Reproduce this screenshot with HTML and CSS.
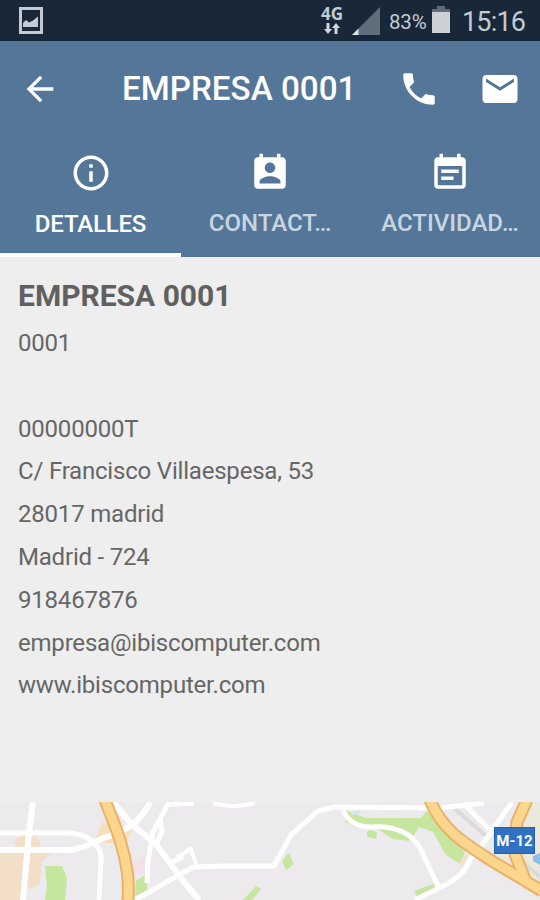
FILE: index.html
```html
<!DOCTYPE html>
<html lang="es">
<head>
  <meta charset="UTF-8" />
  <meta name="viewport" content="width=device-width, initial-scale=1.0" />
  <title>EMPRESA 0001</title>
  <link rel="stylesheet" href="styles.css">
</head>
<body>
  <div class="status-bar">
    <svg class="status-picture" width="24" height="28" viewBox="0 0 24 28">
      <rect x="1.500" y="1.500" width="21" height="24" fill="none" stroke="#c3cad3" stroke-width="3" />
      <path d="M4 20v-4l3-3 3 2.500 4-2 5-4v10.500z" fill="#c3cad3" />
    </svg>
    <div class="network">
      <span>4G</span>
      <svg width="16" height="11" viewBox="0 0 16 11" fill="#d0d6dc">
        <path d="M2.500 0h3v6H8l-4 5-4-5h2.500zM10.500 11h3V5H16l-4-5-4 5h2.500z" />
      </svg>
    </div>
    <svg class="signal" width="28" height="28" viewBox="0 0 28 28">
      <path d="M28 0v28H0z" fill="#5f6e7b" />
      <path d="M6.500 21.500V28H0z" fill="#dde2e6" />
    </svg>
    <span class="percent">83%</span>
    <svg class="battery" width="18" height="27" viewBox="0 0 18 27">
      <path d="M5 0h8v3h5v4H0V3h5z" fill="#5f6e7b" />
      <path d="M0 6h18v21H0z" fill="#cdd1d6" />
    </svg>
    <span class="clock">15:16</span>
  </div>

  <header>
    <svg class="back" width="40" height="40" viewBox="0 0 24 24" fill="#fff">
      <path d="M20 11H7.830l5.590-5.590L12 4l-8 8 8 8 1.410-1.410L7.830 13H20v-2z" />
    </svg>
    <h1>EMPRESA 0001</h1>
    <svg class="call" width="42" height="42" viewBox="0 0 24 24" fill="#fff">
      <path d="M6.620 10.790c1.440 2.830 3.760 5.140 6.590 6.590l2.200-2.200c.27-.27.67-.36 1.020-.24 1.120.37 2.330.57 3.570.57.55 0 1 .45 1 1V20c0 .55-.45 1-1 1-9.390 0-17-7.610-17-17 0-.55.45-1 1-1h3.500c.55 0 1 .45 1 1 0 1.250.2 2.450.57 3.570.11.35.03.74-.25 1.020l-2.200 2.200z" />
    </svg>
    <svg class="mail" width="42" height="42" viewBox="0 0 24 24" fill="#fff">
      <path d="M20 4H4c-1.100 0-1.990.9-1.990 2L2 18c0 1.100.9 2 2 2h16c1.100 0 2-.9 2-2V6c0-1.100-.9-2-2-2zm0 4l-8 5-8-5V6l8 5 8-5v2z" />
    </svg>
  </header>

  <nav>
    <div class="tab active">
      <svg width="42" height="42" viewBox="0 0 24 24" fill="#fff">
        <path d="M11 17h2v-6h-2v6zm1-15C6.480 2 2 6.480 2 12s4.480 10 10 10 10-4.480 10-10S17.520 2 12 2zm0 18c-4.410 0-8-3.590-8-8s3.590-8 8-8 8 3.590 8 8-3.590 8-8 8zM11 9h2V7h-2v2z" />
      </svg>
      <span>DETALLES</span>
    </div>
    <div class="tab">
      <svg width="42" height="42" viewBox="0 0 24 24" fill="#fff">
        <path d="M19 3h-1V1h-2v2H8V1H6v2H5c-1.110 0-2 .9-2 2v14c0 1.100.89 2 2 2h14c1.100 0 2-.9 2-2V5c0-1.100-.9-2-2-2zm-7 3c1.660 0 3 1.340 3 3s-1.340 3-3 3-3-1.340-3-3 1.340-3 3-3zm6 12H6v-1c0-2 4-3.100 6-3.100s6 1.100 6 3.100v1z" />
      </svg>
      <span>CONTACT…</span>
    </div>
    <div class="tab">
      <svg width="42" height="42" viewBox="0 0 24 24" fill="#fff">
        <path d="M17 10H7v2h10v-2zm2-7h-1V1h-2v2H8V1H6v2H5c-1.110 0-1.990.9-1.990 2L3 19c0 1.100.89 2 2 2h14c1.100 0 2-.9 2-2V5c0-1.100-.9-2-2-2zm0 16H5V8h14v11zm-5-5H7v2h7v-2z" />
      </svg>
      <span>ACTIVIDAD…</span>
    </div>
  </nav>

  <main>
    <h2>EMPRESA 0001</h2>
    <p>0001</p>
    <p class="empty"></p>
    <p>00000000T</p>
    <p>C/ Francisco Villaespesa, 53</p>
    <p>28017 madrid</p>
    <p>Madrid - 724</p>
    <p>918467876</p>
    <p>empresa@ibiscomputer.com</p>
    <p>www.ibiscomputer.com</p>
  </main>

  <div class="map">
    <svg width="540" height="98" viewBox="0 0 540 98" fill="none">
      <rect width="540" height="98" fill="#eceaed" />
      <!-- built-up areas and parks -->
      <path d="M0 51h52l-10 8-2 22-10 6-8-3-2 14H0zM14 40l10-9h10l7 10-2 6H18z" fill="#f3dfc8" />
      <path d="M95 40l7-20 18 8 12-1-7 18-14-4z" fill="#f8dfb9" />
      <path d="M134 60l8-7 6 8-3 12-10-2z" fill="#f2e1e8" />
      <path d="M45 64h17l5 12-2 22H45l2-13z" fill="#c6e6a0" />
      <path d="M136 79l9-6 3 16-13 7z" fill="#c6e6a0" />
      <path d="M282 59l7-8 5 11-8 6zM243 98l13-14 5 3-9 11z" fill="#c6e6a0" />
      <path d="M344 8l22 8h55l5-7 10 7 15 20 14 14-5 12-14-9-13-23-14-5-9 14-17-2-17-11-21-1-9-5zM367 30l3-2 7 2-1 7-9-2zM414 89l19-7 3 5-19 8z" fill="#c6e6a0" />
      <path d="M459 60l7-8 2 3-6 9z" fill="#f3dfc8" />
      <path d="M515 12l8-12h17v98l-43-36 11-26z" fill="#ebe8dc" />
      <path d="M533 54l7-3v12l-7-4z" fill="#8dbcf4" />
      <path d="M352 12l8-2" stroke="#cde9ec" stroke-width="3" />
      <path d="M455 7l31 27M525 62l15 13" stroke="#dadadc" stroke-width="4" />
      <!-- streets -->
      <g stroke="#fff" stroke-linejoin="round">
        <path d="M33 0l-4 30-6 68" stroke-width="6" />
        <path d="M0 48h71q16-3 32-12 35-9 47-36" stroke-width="6" />
        <path d="M0 31h70c18 1 33 13 31 29l-2 38" stroke-width="5" />
        <path d="M113 0l19 23 23 18 26 35 18 22" stroke-width="6" />
        <path d="M180 2h-12l-15 28-5 29-1 22M160 16l2 13-5 12M171 61l12-7M134 98l15-8 44-25 32-1h49l17-31 27-24 17-4 104 1 45-5" stroke-width="5" />
        <path d="M177 55l14-8 6 18M213 1q20 6 42 0M180 2h14" stroke-width="4" />
        <path d="M343 8q7 17 28 17 36-2 49 21l18 38M415 98l28-14q22-11 26-25l16-20 27-39M463 1l27 27" stroke-width="5" />
      </g>
      <!-- motorways -->
      <path d="M105 -2c9 24 18 43 22 70q2 12 1 32M430 -2c12 30 34 43 62 61l50 30M527 -2l-10 22-2 32 11 28" stroke="#e9b269" stroke-width="13" />
      <path d="M105 -2c9 24 18 43 22 70q2 12 1 32M430 -2c12 30 34 43 62 61l50 30M527 -2l-10 22-2 32 11 28" stroke="#fcd68d" stroke-width="9" />
    </svg>
    <span class="road-sign">M-12</span>
  </div>
</body>
</html>
```

FILE: styles.css
```css
/* Global Styles */
* {
  box-sizing: border-box;
}
body {
  margin: 0;
  height: 900px;
  overflow: hidden;
  font-family: Roboto, sans-serif;
  background-color: #eee;
  display: flex;
  flex-direction: column;
}
svg {
  display: block;
  flex: none;
}

/* Status bar */
.status-bar {
  height: 41px;
  flex: none;
  display: flex;
  align-items: flex-start;
  padding: 7px 13px 0 19px;
  background-color: #182838;
  border-bottom: 1px solid #102538;
  color: #c4cbd2;
}
.network {
  width: 24px;
  margin: -3px 8px 0 auto;
  font-family: "Open Sans", sans-serif;
  font-size: 17px;
  font-weight: 700;
  line-height: 19px;
  display: flex;
  flex-direction: column;
  align-items: center;
}
.percent {
  width: 38px;
  margin-left: 9px;
  font-size: 20.5px;
  line-height: 30px;
  letter-spacing: -0.2px;
}
.battery {
  margin-left: 5px;
  margin-top: -1px;
}
.clock {
  width: 65px;
  margin-left: 12px;
  font-size: 27px;
  line-height: 30px;
  letter-spacing: -0.8px;
  white-space: nowrap;
}

/* Title bar */
header {
  height: 95px;
  flex: none;
  display: flex;
  align-items: center;
  padding: 0 18px 0 20px;
  background-color: #547799;
}
h1 {
  margin: 0 0 0 62px;
  width: 276px;
  color: #fff;
  font-size: 33.2px;
  font-weight: 500;
  line-height: 40px;
  white-space: nowrap;
}
.mail {
  margin-left: 39px;
}

/* Tabs */
nav {
  height: 121px;
  flex: none;
  display: grid;
  grid-template-columns: 180px 180px 180px;
  background-color: #547799;
}
.tab {
  display: flex;
  flex-direction: column;
  align-items: center;
  padding-top: 16px;
  color: #c9d5e1;
  font-size: 24px;
  font-weight: 500;
  line-height: 30px;
  white-space: nowrap;
}
.tab span {
  margin-top: 14px;
}
.tab.active {
  width: 181px;
  color: #fff;
  border-bottom: 4px solid #fff;
}
.tab.active span {
  margin-top: 15px;
  letter-spacing: -0.2px;
}

/* Company details */
main {
  flex: 1;
  padding: 17px 18px 0;
  color: #666;
}
h2 {
  margin: 0;
  color: #606060;
  font-size: 30px;
  font-weight: 700;
  line-height: 44px;
}
main p {
  margin: 0;
  height: 42.8px;
  font-size: 24px;
  line-height: 51px;
  letter-spacing: -0.2px;
  white-space: nowrap;
}

/* Map */
.map {
  position: relative;
  height: 98px;
  flex: none;
}
.road-sign {
  position: absolute;
  left: 494px;
  top: 25px;
  width: 41px;
  height: 27px;
  background-color: #3071c2;
  border: 1px solid #2260b2;
  color: #fff;
  font-size: 15px;
  font-weight: 700;
  line-height: 27px;
  text-align: center;
}
```
